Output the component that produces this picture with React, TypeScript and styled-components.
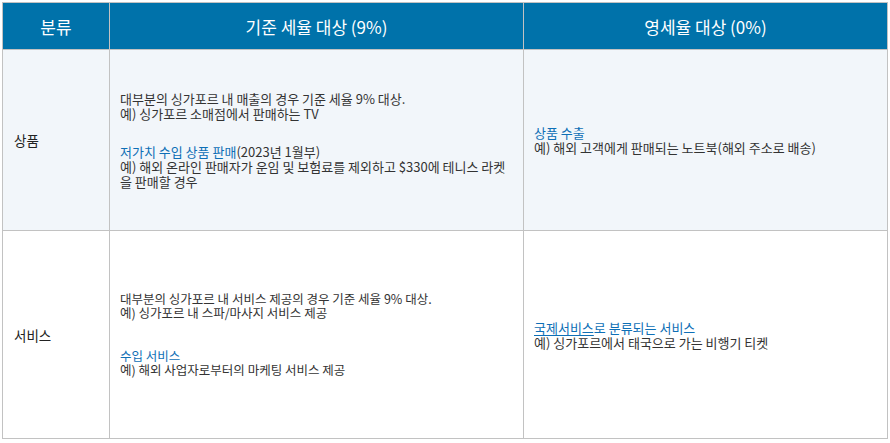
import styled, { createGlobalStyle } from 'styled-components';

const GlobalStyle = createGlobalStyle`
  html, body {
    margin: 0;
    padding: 0;
    background: #ffffff;
  }
  body {
    font-family: "Noto Sans CJK KR", "Noto Sans", sans-serif;
    color: #333;
  }
`;

// Styled Components

const Page = styled.div`
  padding: 2px;
  width: 890px;
  box-sizing: border-box;
`;

const Table = styled.table`
  width: 886px;
  border-collapse: collapse;
  table-layout: fixed;
  border: 1px solid #c2c2c2;
`;

const HeadCell = styled.th`
  height: 46px;
  padding: 0;
  background: #0072aa;
  color: #ffffff;
  font-size: 17px;
  font-weight: 400;
  text-align: center;
  vertical-align: middle;
  border-left: 1px solid #c2c2c2;
`;

const Row = styled.tr<{ $shaded: boolean; $height: number }>`
  height: ${(p) => p.$height}px;
  background: ${(p) => (p.$shaded ? '#f2f6fa' : '#ffffff')};
  border-top: 1px solid #c2c2c2;
`;

const LabelCell = styled.td`
  padding: 0 0 0 11px;
  font-size: 13.5px;
  color: #222;
  vertical-align: middle;
  border-left: 1px solid #c2c2c2;
`;

const Cell = styled.td<{ $small?: boolean }>`
  padding: 0 10px;
  vertical-align: middle;
  border-left: 1px solid #c2c2c2;
  font-size: ${(p) => (p.$small ? '12.5px' : '13px')};
  line-height: ${(p) => (p.$small ? '14px' : '15px')};
`;

const Para = styled.div<{ $gap: number }>`
  margin-top: ${(p) => p.$gap}px;
`;

const Line = styled.div`
  color: #333;
  white-space: nowrap;
`;

const Blue = styled.span`
  color: #0e6fb6;

  u {
    text-decoration: underline;
    text-underline-offset: 2px;
  }
`;

const rows = [
  {
    label: '상품',
    height: 181,
    small: false,
    standard: [
      {
        gap: 0,
        lines: [
          <>대부분의 싱가포르 내 매출의 경우 기준 세율 9% 대상.</>,
          <>예) 싱가포르 소매점에서 판매하는 TV</>,
        ],
      },
      {
        gap: 23,
        lines: [
          <>
            <Blue>저가치 수입 상품 판매</Blue>(2023년 1월부)
          </>,
          <>예) 해외 온라인 판매자가 운임 및 보험료를 제외하고 $330에 테니스 라켓</>,
          <>을 판매할 경우</>,
        ],
      },
    ],
    zero: [
      <>
        <Blue>상품 수출</Blue>
      </>,
      <>예) 해외 고객에게 판매되는 노트북(해외 주소로 배송)</>,
    ],
  },
  {
    label: '서비스',
    height: 208,
    small: true,
    standard: [
      {
        gap: 0,
        lines: [
          <>대부분의 싱가포르 내 서비스 제공의 경우 기준 세율 9% 대상.</>,
          <>예) 싱가포르 내 스파/마사지 서비스 제공</>,
        ],
      },
      {
        gap: 29,
        lines: [
          <>
            <Blue>수입 서비스</Blue>
          </>,
          <>예) 해외 사업자로부터의 마케팅 서비스 제공</>,
        ],
      },
    ],
    zero: [
      <>
        <Blue>
          <u>국제서비스</u>로 분류되는 서비스
        </Blue>
      </>,
      <>예) 싱가포르에서 태국으로 가는 비행기 티켓</>,
    ],
  },
];

export default function App() {
  return (
    <>
      <GlobalStyle />
      <Page>
        <Table>
          <colgroup>
            <col style={{ width: 107 }} />
            <col style={{ width: 414 }} />
            <col />
          </colgroup>
          <thead>
            <tr>
              <HeadCell>분류</HeadCell>
              <HeadCell>기준 세율 대상 (9%)</HeadCell>
              <HeadCell>영세율 대상 (0%)</HeadCell>
            </tr>
          </thead>
          <tbody>
            {rows.map((row, i) => (
              <Row key={row.label} $shaded={i === 0} $height={row.height}>
                <LabelCell>{row.label}</LabelCell>
                <Cell $small={row.small}>
                  {row.standard.map((para, j) => (
                    <Para key={j} $gap={para.gap}>
                      {para.lines.map((line, k) => (
                        <Line key={k}>{line}</Line>
                      ))}
                    </Para>
                  ))}
                </Cell>
                <Cell>
                  <Para $gap={0}>
                    {row.zero.map((line, k) => (
                      <Line key={k}>{line}</Line>
                    ))}
                  </Para>
                </Cell>
              </Row>
            ))}
          </tbody>
        </Table>
      </Page>
    </>
  );
}
